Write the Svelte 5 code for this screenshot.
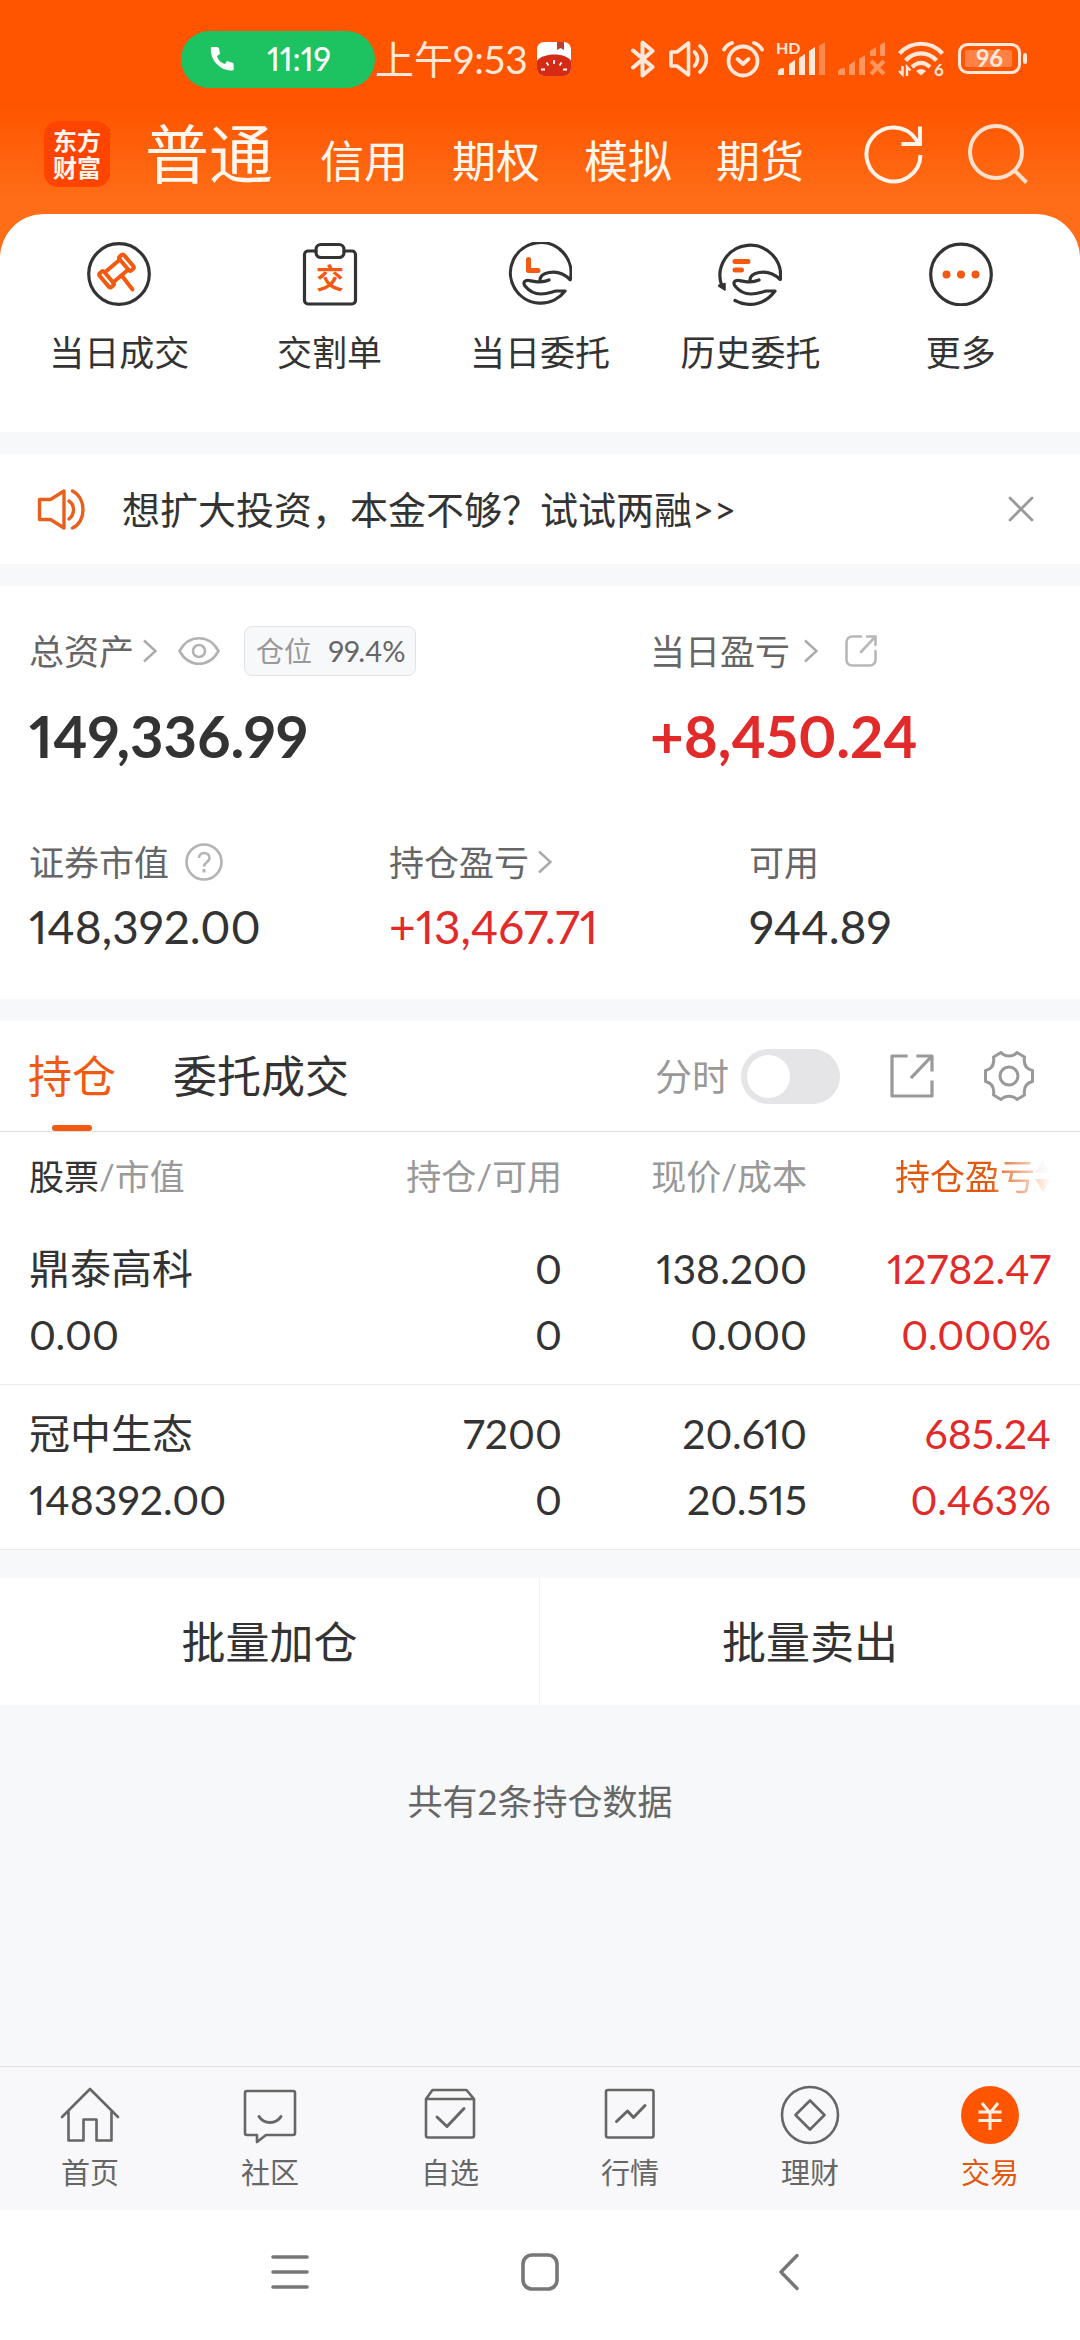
<script lang="ts">
  const accounts = ["信用", "期权", "模拟", "期货"];

  const shortcuts = [
    { icon: "gavel", label: "当日成交" },
    { icon: "clipboard", label: "交割单" },
    { icon: "hand", label: "当日委托" },
    { icon: "history", label: "历史委托" },
    { icon: "more", label: "更多" },
  ];

  const holdings = [
    {
      name: "鼎泰高科",
      value: "0.00",
      amount: "0",
      available: "0",
      price: "138.200",
      cost: "0.000",
      profit: "12782.47",
      rate: "0.000%",
    },
    {
      name: "冠中生态",
      value: "148392.00",
      amount: "7200",
      available: "0",
      price: "20.610",
      cost: "20.515",
      profit: "685.24",
      rate: "0.463%",
    },
  ];

  const menu = ["首页", "社区", "自选", "行情", "理财", "交易"];

  let bannerOpen = $state(true);
  let timeline = $state(false);
  let tab = $state("持仓");
  let current = $state("交易");
</script>

{#snippet chevron()}
  <svg class="chevron" width="14" height="24" viewBox="0 0 14 24" fill="none" stroke="#aaa" stroke-width="2.5">
    <path d="M1 1.5 12.5 12 1 22.5" />
  </svg>
{/snippet}

<div class="page">
  <header>
    <div class="status">
      <div class="call">
        <svg width="24" height="26" viewBox="0 0 24 26" fill="#fff">
          <path d="M1 1h6l2 1 1 6-3 2c1 4 4 7 8 8l2-3 6 2 .6 1V24c-5 1.500-11-.4-16-5.200C2.500 14 0 7.500 1 1z" />
        </svg>
        <span>11:19</span>
      </div>
      <span class="clock">上午9:53</span>
      <svg class="app" width="34" height="34" viewBox="0 0 34 34">
        <rect width="34" height="34" rx="7" fill="#fff" />
        <path d="M20 0h7v8l-3.500-2-3.500 2z" fill="#b8402e" />
        <path d="M0 19c5-8 28-9 34 0v8a7 7 0 0 1-7 7H7a7 7 0 0 1-7-7z" fill="#d42a16" />
        <path d="M17 18v4M9.500 20.500l2 3M24.500 20.500l-2 3M4 27.500h4M26 27.500h4" stroke="#fff" stroke-width="1.800" />
      </svg>

      <div class="signals">
        <svg width="26" height="38" viewBox="0 0 26 38" fill="none" stroke="#ffe8da" stroke-width="4" stroke-linejoin="round" stroke-linecap="round">
          <path d="M3 10.500 22.500 27 12.500 35.500V2.500L22.500 11 3 27.500" />
        </svg>
        <svg width="42" height="38" viewBox="-1 0 42 38" fill="none" stroke="#ffe8da" stroke-width="3.600" stroke-linejoin="round" stroke-linecap="round">
          <path d="M2 12h6L19.500 3v32L8 26H2z" />
          <path d="M25.500 12c4 4 4 10 0 14M31 6c8.500 7 8.500 19 0 26" />
        </svg>
        <svg width="42" height="38" viewBox="0 0 42 38" fill="none" stroke="#ffe8da" stroke-width="3.800" stroke-linecap="round">
          <circle cx="21" cy="21" r="14.500" />
          <path d="m15.500 19 5.500 5 5.500-5" stroke-linejoin="round" />
          <path d="M2 9.500Q5 4.500 10 3M40 9.500Q37 4.500 32 3" />
        </svg>
        <svg width="50" height="44" viewBox="0 -3 50 44" fill="#ffe8da">
          <text x="0" y="14" font-size="16" font-weight="700">HD</text>
          <path d="M2 35v-3q0-4 6-4v7zM13 35V24l6-4v15zM23 35V18l6-4v21zM33 35V11l6-4v28z" />
          <path d="M43 35V6l6-4v33z" opacity=".35" />
        </svg>
        <svg width="48" height="38" viewBox="0 0 48 38" fill="#ff955f">
          <path d="M0 35v-3q0-4 7-4v7zM11 35V25l6-4v14zM21 35V19l6-4v20zM32 16V11l6-4v9zM42 16V5l5-3v14z" />
          <path d="m33 21 13 13M46 21 33 34" stroke="#ff955f" stroke-width="4" />
        </svg>
        <svg width="48" height="46" viewBox="0 -4 48 46" fill="none" stroke="#ffe8da" stroke-width="4.200">
          <path d="M1.500 13.500c12-13 31-13 43 0M7.500 20.500c9-9.500 22-9.500 31 0M14 27c6-5.500 12-5.500 18 0" />
          <path d="M23 35.500 18 31q5-4 10 0z" fill="#ffe8da" stroke="none" />
          <path d="M4.500 26v8.500L1 31M9 36v-9l3.500 3.500" stroke-width="2.400" />
          <text x="36" y="36" font-size="17" font-weight="700" fill="#ffe8da" stroke="none">6</text>
        </svg>
        <svg width="70" height="32" viewBox="0 0 70 32">
          <rect x="1.500" y="1.500" width="60" height="28" rx="8" fill="none" stroke="#ffe8da" stroke-width="3" />
          <rect x="7" y="7" width="47" height="17" rx="2" fill="#ff8144" />
          <rect x="65" y="10" width="4" height="11" rx="2" fill="#ffe8da" />
          <text x="31.500" y="24" font-size="24" font-weight="700" text-anchor="middle" fill="#ffe8da">96</text>
        </svg>
      </div>
    </div>

    <nav class="accounts">
      <a class="logo" href="#home">东方<br />财富</a>
      <div class="names">
        <a class="active" href="#normal">普通</a>
        {#each accounts as name}
          <a href="#{name}">{name}</a>
        {/each}
      </div>
      <button class="refresh" aria-label="刷新">
        <svg width="60" height="60" viewBox="0 0 60 60" fill="none" stroke="#fff2e8" stroke-width="4">
          <path d="M56.500 31A27 27 0 1 1 52 15.500L55 20" />
          <path d="M56 2.500V20H37.500" />
        </svg>
      </button>
      <button aria-label="搜索">
        <svg width="60" height="60" viewBox="0 0 60 60" fill="none" stroke="#ffe0cc" stroke-width="4">
          <circle cx="28" cy="28" r="26" />
          <path d="m45.500 45.500 13 13" />
        </svg>
      </button>
    </nav>
  </header>

  <section class="shortcuts">
    {#each shortcuts as item}
      <button>
        <svg width="64" height="64" viewBox="0 0 64 64" fill="none" stroke="#333" stroke-width="3.200" stroke-linecap="round" stroke-linejoin="round">
          {#if item.icon === "gavel"}
            <circle cx="32" cy="32" r="30.300" />
            <g stroke="#f25a11" stroke-width="4">
              <g transform="rotate(-40 29.500 29)">
                <rect x="13.500" y="20" width="6" height="18" rx="2" />
                <rect x="39.500" y="20" width="6" height="18" rx="2" />
                <path d="M19.500 22.500h20M19.500 35.500h20" />
              </g>
              <path d="m35.500 34.500 10 13" />
            </g>
          {:else if item.icon === "clipboard"}
            <path d="M18 9h-8a3.500 3.500 0 0 0-3.500 3.500v46A3.500 3.500 0 0 0 10 62h44a3.500 3.500 0 0 0 3.500-3.500v-46A3.500 3.500 0 0 0 54 9h-8" />
            <rect x="18" y="2.500" width="28" height="13" rx="5" />
            <text x="32" y="46.500" font-size="28" font-weight="700" text-anchor="middle" fill="#f25a11" stroke="none">交</text>
          {:else if item.icon === "hand"}
            <path d="M62.300 37.500A30.300 30.300 0 1 0 57 49H48c-6 1.500-8 3-15 3-8 0-12-3-16-8-2.500-4 0-6 4-5.500 8 1.500 13 2.500 20-.5" />
            <path d="M32 38c0-4 4-6.500 9-7.500 8-1.500 15 1 21 7" />
            <path d="M20.500 17.500V28.500H30" stroke="#f25a11" stroke-width="5" />
          {:else if item.icon === "history"}
            <path d="M3.500 43A30.300 30.300 0 1 1 62.300 37.500C56 31.500 49 29 41 30.500c-5 1-9 3.500-9 7.500" />
            <path d="m0 43.500 7-2V48z" fill="#333" stroke-width="1.500" />
            <path d="M17 58.500c15 8 31 3 40-9.500H48c-6 1.500-8 3-15 3-8 0-12-3-16-8-2.500-4 0-6 4-5.500 8 1.500 13 2.500 20-.5" />
            <path d="M17 19.500h13M17 28h6.500" stroke="#f25a11" stroke-width="5" />
          {:else}
            <circle cx="32" cy="32.500" r="30.300" />
            <g fill="#f25a11" stroke="none">
              <circle cx="17.500" cy="32.500" r="4" />
              <circle cx="32" cy="32.500" r="4" />
              <circle cx="46.500" cy="32.500" r="4" />
            </g>
          {/if}
        </svg>
        <span>{item.label}</span>
      </button>
    {/each}
  </section>

  {#if bannerOpen}
    <section class="banner">
      <svg width="48" height="44" viewBox="0 0 48 44" fill="none" stroke="#e8601c" stroke-width="3.400" stroke-linejoin="round" stroke-linecap="round">
        <path d="M2.500 12.500h11L27 4v37L13.500 32.500h-11z" />
        <path d="M32 14c6 4 6 13 0 18M35.500 4c14 7 14 31 0 37" />
      </svg>
      <a href="#margin">想扩大投资，本金不够？试试两融&gt;&gt;</a>
      <button aria-label="关闭" onclick={() => (bannerOpen = false)}>
        <svg width="26" height="26" viewBox="0 0 26 26" stroke="#999" stroke-width="2.800" stroke-linecap="round">
          <path d="m2 2 22 22M24 2 2 24" />
        </svg>
      </button>
    </section>
  {/if}

  <section class="assets">
    <div class="totals">
      <div>
        <div class="label">
          <span>总资产</span>
          {@render chevron()}
          <svg class="eye" width="42" height="30" viewBox="0 0 42 30" fill="none" stroke="#b3b3b3" stroke-width="2.600">
            <path d="M1.500 15C11-2 31-2 40.500 15 31 32 11 32 1.500 15z" />
            <circle cx="21" cy="15" r="6" />
          </svg>
          <span class="badge">仓位 <b>99.4%</b></span>
        </div>
        <div class="total">149,336.99</div>
      </div>
      <div>
        <div class="label daily">
          <span>当日盈亏</span>
          {@render chevron()}
          <svg class="share" width="32" height="32" viewBox="0 0 32 32" fill="none" stroke="#b8b8b8" stroke-width="2.600" stroke-linecap="round">
            <path d="M16 1.500H7A5.500 5.500 0 0 0 1.500 7v18A5.500 5.500 0 0 0 7 30.500h18a5.500 5.500 0 0 0 5.500-5.500v-9M22 1.500h8.500V10M30 2 16 17" />
          </svg>
        </div>
        <div class="total up">+8,450.24</div>
      </div>
    </div>
    <div class="details">
      <div>
        <div class="label">
          <span>证券市值</span>
          <svg class="help" width="38" height="38" viewBox="0 0 38 38" fill="none" stroke="#b3b3b3" stroke-width="2.600">
            <circle cx="19" cy="19" r="17.500" />
            <path d="M14 15c0-7 10.500-6.500 10.500 0 0 4-5.500 4.500-5.500 8.500" />
            <path d="M19 26v3.500" stroke-width="3" />
          </svg>
        </div>
        <div class="amount">148,392.00</div>
      </div>
      <div>
        <div class="label">
          <span>持仓盈亏</span>
          {@render chevron()}
        </div>
        <div class="amount up">+13,467.71</div>
      </div>
      <div>
        <div class="label"><span>可用</span></div>
        <div class="amount">944.89</div>
      </div>
    </div>
  </section>

  <section class="holdings">
    <div class="toolbar">
      {#each ["持仓", "委托成交"] as name}
        <button class="tab" class:active={tab === name} onclick={() => (tab = name)}>{name}</button>
      {/each}
      <label>
        分时
        <input type="checkbox" role="switch" bind:checked={timeline} />
      </label>
      <button class="tool" aria-label="分享">
        <svg width="50" height="50" viewBox="0 0 50 50" fill="none" stroke="#999" stroke-width="3.200" stroke-linecap="square" stroke-linejoin="round">
          <path d="M19 5H5v40h40V31M31 5h14v14M44 6 25 26" />
        </svg>
      </button>
      <button class="tool" aria-label="设置">
        <svg width="50" height="50" viewBox="0 0 50 50" fill="none" stroke="#999" stroke-width="3" stroke-linejoin="round">
          <path d="M17 1.500C21 6 29 6 33 1.500L40.500 6C39.500 13 42 18 48.500 19.500V30.500C42 32 39.500 37 40.500 44L33 48.500C29 44 21 44 17 48.500L9.500 44C10.500 37 8 32 1.500 30.500V19.500C8 18 10.500 13 9.500 6z" />
          <circle cx="25" cy="25" r="9" />
        </svg>
      </button>
    </div>

    <table>
      <colgroup>
        <col />
        <col class="narrow" />
        <col class="narrow" />
        <col class="last" />
      </colgroup>
      <thead>
        <tr>
          <th><strong>股票</strong>/市值</th>
          <th>持仓/可用</th>
          <th>现价/成本</th>
          <th>
            <span class="sorted">
              持仓盈亏
              <svg width="16" height="32" viewBox="0 0 16 32">
                <path d="M8 0l8 13H0z" fill="#ccc" />
                <path d="M8 32 0 19h16z" fill="#f25a11" />
              </svg>
            </span>
          </th>
        </tr>
      </thead>
      <tbody>
        {#each holdings as row}
          <tr>
            <td><div>{row.name}</div>{row.value}</td>
            <td>{row.amount}<br />{row.available}</td>
            <td>{row.price}<br />{row.cost}</td>
            <td class="up">{row.profit}<br />{row.rate}</td>
          </tr>
        {/each}
      </tbody>
    </table>
  </section>

  <section class="batch">
    <button>批量加仓</button>
    <button>批量卖出</button>
  </section>

  <p class="count">共有{holdings.length}条持仓数据</p>

  <nav class="menu">
    {#each menu as name, i}
      <button class:active={current === name} onclick={() => (current = name)}>
        <svg width="60" height="60" viewBox="0 0 60 60" fill="none" stroke="#666" stroke-width="2.600" stroke-linejoin="round" stroke-linecap="round">
          {#if i === 0}
            <path d="M2 32 30 4l28 28M8.500 27v28.500h15v-21h13v21h15V27" />
          {:else if i === 1}
            <path d="M7 6h46a2 2 0 0 1 2 2v40a2 2 0 0 1-2 2H26l-9 7v-7H7a2 2 0 0 1-2-2V8a2 2 0 0 1 2-2z" />
            <path d="M19 31.500c5 8 17 8 22 0" stroke-width="3" />
          {:else if i === 2}
            <path d="M6 14 12.500 5h34L54 14v36.500a2 2 0 0 1-2 2H8a2 2 0 0 1-2-2zM6 14h48" />
            <path d="m17 32 10 9.500 17-18" stroke-width="3" />
          {:else if i === 3}
            <rect x="6" y="5" width="47.500" height="47.500" rx="2" />
            <path d="m16.500 36.500 11-10.500 6 6.500L45 20.500" stroke-width="3" />
          {:else if i === 4}
            <circle cx="30" cy="30" r="28" />
            <path d="M30 15.500 44.500 30 30 44.500 15.500 30z" />
          {:else}
            <circle cx="30" cy="30" r="29" fill="#ff5500" stroke="none" />
            <path d="m22 18 8 10 8-10M30 28v17M18.500 27h23M18.500 35.500h23" stroke="#fff0e6" stroke-linecap="butt" stroke-width="3" />
          {/if}
        </svg>
        <span>{name}</span>
      </button>
    {/each}
  </nav>

  <div class="system">
    <button aria-label="最近任务">
      <svg width="38" height="38" viewBox="0 0 38 38" stroke="#777" stroke-width="3.600" stroke-linecap="round">
        <path d="M2 4h34M2 19h34M2 34h34" />
      </svg>
    </button>
    <button aria-label="主屏幕">
      <svg width="38" height="38" viewBox="0 0 38 38" fill="none" stroke="#777" stroke-width="3.600">
        <rect x="2" y="2" width="34" height="34" rx="9" />
      </svg>
    </button>
    <button aria-label="返回">
      <svg width="38" height="38" viewBox="0 0 38 38" fill="none" stroke="#777" stroke-width="3.400" stroke-linecap="round" stroke-linejoin="round">
        <path d="M26 2.500 10 19l16 16.500" />
      </svg>
    </button>
  </div>
</div>

<style>
  :global(body) {
    background: #f7f8fa;
  }
  .page {
    min-height: 100vh;
    display: flex;
    flex-direction: column;
    color: #333;
    font-family: Lato, "Noto Sans CJK SC", sans-serif;
    font-size: 35px;
    font-variant-numeric: proportional-nums;
    line-height: 1;
  }
  button {
    padding: 0;
    border: none;
    background: none;
    color: inherit;
    font: inherit;
    cursor: pointer;
  }
  a {
    color: inherit;
    text-decoration: none;
  }
  svg {
    display: block;
    flex-shrink: 0;
  }
  .up {
    color: #e12a2a;
  }

  header {
    padding-bottom: 44px;
    margin-bottom: -44px;
    background: linear-gradient(#ff5500 107px, #ff6d17 200px);
    color: #fff6ee;
  }
  .status {
    display: flex;
    align-items: center;
    height: 107px;
    padding: 11px 52px 0 181px;
    box-sizing: border-box;
  }
  .call {
    display: flex;
    align-items: center;
    justify-content: space-between;
    width: 194px;
    height: 57px;
    padding: 0 44px 0 29px;
    box-sizing: border-box;
    border-radius: 29px;
    background: #1dc261;
    color: #fff;
    font-size: 32px;
    font-weight: 500;
  }
  .clock {
    color: #ffe8da;
    font-size: 39px;
    white-space: nowrap;
  }
  .app {
    margin-left: 9px;
  }
  .signals {
    display: flex;
    align-items: center;
    gap: 12px;
    margin-left: auto;
  }
  .accounts {
    display: flex;
    align-items: center;
    height: 107px;
    padding: 0 52px 14px 44px;
    box-sizing: border-box;
  }
  .logo {
    width: 66px;
    padding: 6px 0;
    border-radius: 14px;
    background: #ff4400;
    font-size: 24px;
    font-weight: 700;
    line-height: 27px;
    text-align: center;
  }
  .names {
    display: flex;
    align-items: baseline;
    gap: 44px;
    flex: 1;
    padding-left: 35px;
    font-size: 44px;
    white-space: nowrap;
  }
  .names .active {
    margin-right: 3px;
    font-size: 64px;
  }
  .refresh {
    margin-right: 44px;
  }

  .shortcuts {
    display: grid;
    grid-template-columns: repeat(5, 1fr);
    padding: 28px 14px 60px;
    border-radius: 44px 44px 0 0;
    background: #fff;
  }
  .shortcuts button {
    display: flex;
    flex-direction: column;
    align-items: center;
    gap: 26px;
    line-height: 40px;
  }

  .banner {
    display: flex;
    align-items: center;
    height: 110px;
    margin-top: 22px;
    padding: 0 46px 0 37px;
    background: #fff;
    font-size: 38px;
  }
  .banner a {
    flex: 1;
    margin-left: 37px;
  }

  .assets {
    margin-top: 22px;
    padding: 40px 0 42px;
    background: #fff;
  }
  .totals {
    display: grid;
    grid-template-columns: 23fr 17fr;
    margin-bottom: 68px;
  }
  .details {
    display: grid;
    grid-template-columns: repeat(3, 1fr);
  }
  .totals > div,
  .details > div {
    padding-left: 29px;
  }
  .label {
    display: flex;
    align-items: center;
    height: 50px;
    color: #666;
  }
  .label .chevron {
    margin-left: 9px;
  }
  .daily .chevron {
    margin-left: 14px;
  }
  .eye {
    margin: 0 24px 0 21px;
  }
  .badge {
    padding: 0 9px 0 11px;
    border: 1px solid #e3e3e6;
    border-radius: 8px;
    background: #f7f8fa;
    color: #999;
    font-size: 28px;
    line-height: 48px;
  }
  .badge b {
    margin-left: 9px;
    color: #666;
    font-size: 29px;
    font-weight: 400;
  }
  .share {
    margin-left: 27px;
  }
  .help {
    margin-left: 16px;
  }
  .total {
    margin-top: 27px;
    font-size: 58px;
    font-weight: 700;
    line-height: 66px;
  }
  .amount {
    margin-top: 10px;
    font-size: 46px;
    line-height: 60px;
  }

  .holdings {
    margin-top: 22px;
    background: #fff;
  }
  .toolbar {
    display: flex;
    align-items: center;
    height: 110px;
    padding: 0 46px 0 28px;
    border-bottom: 1px solid #e0e0e0;
  }
  .tab {
    position: relative;
    height: 110px;
    margin-right: 57px;
    font-size: 44px;
  }
  .tab.active {
    color: #f25a11;
  }
  .tab.active::after {
    content: "";
    position: absolute;
    left: 50%;
    bottom: 0;
    width: 40px;
    height: 6px;
    margin-left: -20px;
    border-radius: 3px;
    background: #f25a11;
  }
  .toolbar label {
    display: flex;
    align-items: center;
    gap: 12px;
    margin-left: auto;
    color: #999;
    font-size: 37px;
  }
  input {
    appearance: none;
    width: 99px;
    height: 55px;
    margin: 0;
    padding: 6px;
    box-sizing: border-box;
    border-radius: 28px;
    background: #e5e5e7;
  }
  input::before {
    content: "";
    display: block;
    width: 43px;
    height: 43px;
    border-radius: 50%;
    background: #fff;
  }
  input:checked {
    background: #f25a11;
  }
  input:checked::before {
    margin-left: auto;
  }
  .tool {
    margin-left: 47px;
  }

  table {
    width: 100%;
    border-collapse: collapse;
    table-layout: fixed;
  }
  .narrow {
    width: 245px;
  }
  .last {
    width: 273px;
  }
  th {
    height: 88px;
    padding: 0;
    color: #999;
    font-weight: 400;
    text-align: right;
    white-space: nowrap;
  }
  strong {
    color: #333;
    font-weight: 400;
  }
  td {
    padding: 16px 0;
    border-bottom: 1px solid #ebebeb;
    font-size: 41px;
    line-height: 66px;
    text-align: right;
  }
  th:first-child,
  td:first-child {
    padding-left: 29px;
    text-align: left;
  }
  th:last-child,
  td:last-child {
    padding-right: 29px;
  }
  .sorted {
    display: flex;
    align-items: center;
    justify-content: flex-end;
    color: #e0590f;
    mask-image: linear-gradient(to right, #000 74%, transparent);
  }

  .batch {
    display: grid;
    grid-template-columns: 1fr 1fr;
    margin-top: 28px;
    background: #fff;
  }
  .batch button {
    height: 127px;
    font-size: 44px;
  }
  .batch button:first-child {
    border-right: 1px solid #f2f2f4;
  }
  .count {
    flex: 1;
    margin: 0;
    padding: 76px 0;
    color: #666;
    line-height: 40px;
    text-align: center;
  }

  .menu {
    display: grid;
    grid-template-columns: repeat(6, 1fr);
    padding: 18px 0 19px;
    border-top: 1px solid #e0e0e0;
    background: #f8f8fa;
    color: #666;
    font-size: 29px;
  }
  .menu button {
    display: flex;
    flex-direction: column;
    align-items: center;
    gap: 10px;
    line-height: 36px;
  }
  .menu .active {
    color: #e0590f;
  }
  .system {
    display: flex;
    justify-content: center;
    gap: 212px;
    padding: 43px 0 49px;
    background: #fff;
  }
</style>
